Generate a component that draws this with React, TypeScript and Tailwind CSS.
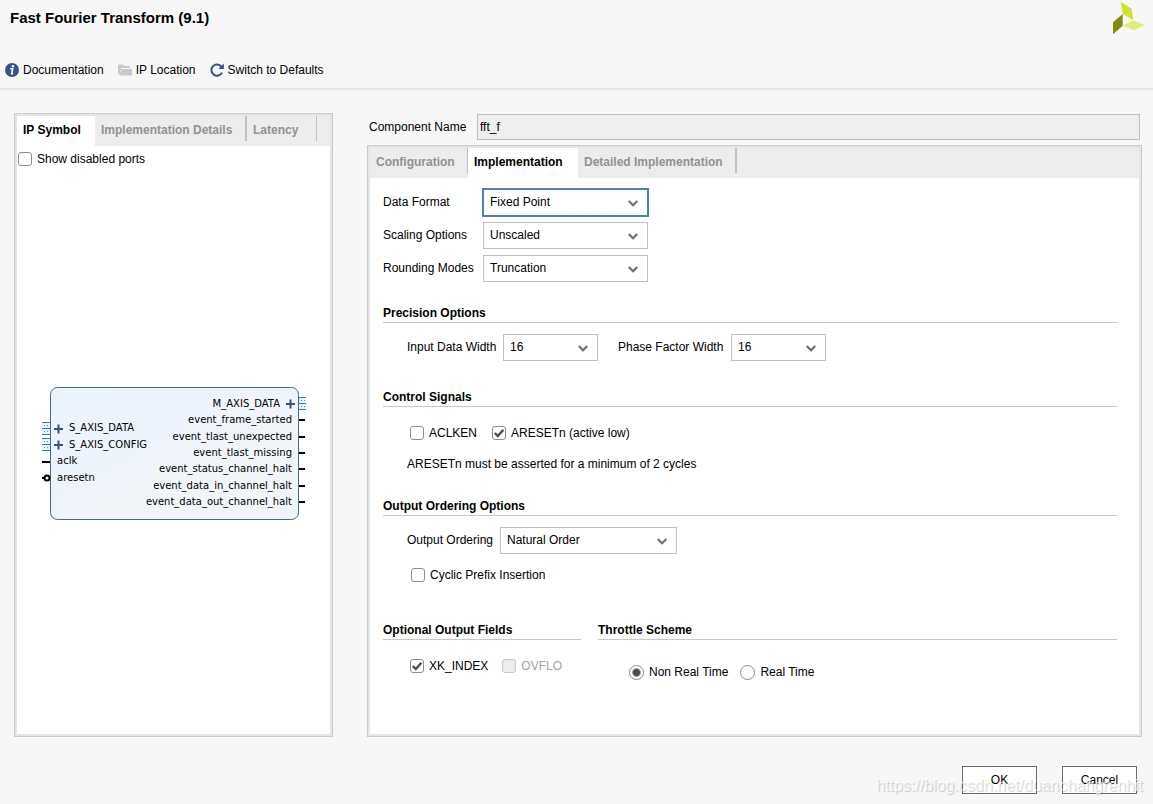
import { useState } from 'react';
import type { ReactNode } from 'react';

interface SelectFieldProps {
    id: string;
    label: string;
    options: string[];
    labelClass: string;
    selectClass: string;
    active?: boolean;
}

interface CheckFieldProps {
    label: string;
    checked?: boolean;
    disabled?: boolean;
}

const eventPorts = [
    { name: 'event_frame_started', y: 420 },
    { name: 'event_tlast_unexpected', y: 437 },
    { name: 'event_tlast_missing', y: 453 },
    { name: 'event_status_channel_halt', y: 469 },
    { name: 'event_data_in_channel_halt', y: 486 },
    { name: 'event_data_out_channel_halt', y: 502 },
];

function SelectField({ id, label, options, labelClass, selectClass, active }: SelectFieldProps) {
    return (
        <div className="flex items-center">
            <label htmlFor={id} className={`shrink-0 whitespace-nowrap pb-0.5 ${labelClass}`}>{label}</label>
            <div className="relative">
                <select
                    id={id}
                    className={`block h-[27px] appearance-none border bg-white pb-0.5 pl-1.5 pr-6 outline-none ${selectClass} ${active ? 'border-[#4f7bc9] ring-1 ring-[#4f7bc9]' : 'border-[#bfbfbf]'}`}
                >
                    {options.map((option) => (
                        <option key={option}>{option}</option>
                    ))}
                </select>
                <svg className="pointer-events-none absolute right-2.5 top-2.5 h-2 w-2.5" viewBox="0 0 10 8" fill="none" stroke="#6e6e6e" strokeWidth="2.2">
                    <path d="M0.7 2 L5 6.2 L9.3 2" />
                </svg>
            </div>
        </div>
    );
}

function CheckField({ label, checked = false, disabled = false }: CheckFieldProps) {
    const [value, setValue] = useState(checked);

    return (
        <label className={`flex h-4 items-center gap-[5px] whitespace-nowrap ${disabled ? 'text-[#a3a3a3]' : ''}`}>
            <span className="relative block size-3.5">
                <input
                    type="checkbox"
                    checked={value}
                    disabled={disabled}
                    onChange={(e) => setValue(e.target.checked)}
                    className="block size-3.5 appearance-none rounded-[3px] border border-[#8c8c8c] bg-white disabled:border-[#c8c8c8] disabled:bg-[#ebecee]"
                />
                {value && (
                    <svg className="pointer-events-none absolute inset-0 size-3.5" viewBox="0 0 14 14" fill="none" stroke="#4d4d4d" strokeWidth="2.4">
                        <path d="M2.8 7 L5.8 10 L11.4 3.8" />
                    </svg>
                )}
            </span>
            {label}
        </label>
    );
}

function RadioField({ label, checked, onChange }: { label: string; checked: boolean; onChange: () => void }) {
    return (
        <label className="flex h-4 items-center gap-[5px] whitespace-nowrap">
            <input
                type="radio"
                name="throttle"
                checked={checked}
                onChange={onChange}
                className="block size-[15px] appearance-none rounded-full border border-[#8c8c8c] bg-white checked:bg-[radial-gradient(circle,#4d4d4d_0_3px,#fff_5px)]"
            />
            {label}
        </label>
    );
}

function SectionTitle({ children }: { children: ReactNode }) {
    return <h2 className="border-b border-[#c8c8c8] pb-px pt-px font-bold">{children}</h2>;
}

function Plus({ x, y }: { x: number; y: number }) {
    return <path d={`M${x - 4.5} ${y}h9M${x} ${y - 4.5}v9`} stroke="#34508c" strokeWidth="2" />;
}

function BusPin({ x, y, width }: { x: number; y: number; width: number }) {
    return (
        <g>
            <rect x={x} y={y} width={width} height="13" fill="#e8f4fd" />
            <path d={`M${x} ${y + 0.5}h${width}M${x} ${y + 6.5}h${width}M${x} ${y + 12.5}h${width}`} stroke="#3f74ad" />
            <path d={`M${x + 2} ${y + 3.5}h${width - 2}M${x + 2} ${y + 9.5}h${width - 2}`} stroke="#4d8fc4" strokeDasharray="1 2" />
        </g>
    );
}

function IpSymbol() {
    return (
        <svg width="269" height="135" viewBox="39 386 269 135" fontFamily='"DejaVu Sans", sans-serif' fontSize="10">
            <defs>
                <linearGradient id="block" x1="0" y1="0" x2="1" y2="1">
                    <stop offset="0" stopColor="#ebf4fe" />
                    <stop offset="0.35" stopColor="#eef4fd" />
                    <stop offset="0.6" stopColor="#f2f5f8" />
                    <stop offset="1" stopColor="#f0f5fa" />
                </linearGradient>
            </defs>
            <rect x="50.5" y="387.5" width="248" height="132" rx="7" fill="url(#block)" stroke="#4266a3" />

            {/* slave side */}
            <BusPin x={42} y={422} width={8} />
            <BusPin x={42} y={438} width={8} />
            <Plus x={58.5} y={429} />
            <Plus x={58.5} y={445} />
            <text x="69" y="431">S_AXIS_DATA</text>
            <text x="69" y="448">S_AXIS_CONFIG</text>
            <path d="M42 462h8M42 478h3" stroke="#000" strokeWidth="2" />
            <circle cx="47" cy="478" r="2.5" fill="#fff" stroke="#000" strokeWidth="2" />
            <text x="57" y="464">aclk</text>
            <text x="57" y="481">aresetn</text>

            {/* master side */}
            <BusPin x={299} y={397} width={7} />
            <Plus x={290.5} y={404} />
            <text x="280" y="407" textAnchor="end">M_AXIS_DATA</text>
            {eventPorts.map((port) => (
                <g key={port.name}>
                    <text x="292" y={port.y + 3} textAnchor="end">{port.name}</text>
                    <path d={`M299 ${port.y}h6`} stroke="#000" strokeWidth="2" />
                </g>
            ))}
        </svg>
    );
}

export default function App() {
    const [throttle, setThrottle] = useState('non-real');

    return (
        <div className='relative flex min-h-screen flex-col bg-[#f7f7f7] font-["Liberation_Sans",Arial,sans-serif] text-[12px] leading-4 text-black'>
            {/* Header */}
            <header className="border-b-2 border-[#e6e6e6]">
                <div className="flex h-[52px] items-start justify-between pl-2.5 pr-2 pt-0.5">
                    <h1 className="pt-2 text-[15px] font-bold">Fast Fourier Transform (9.1)</h1>
                    <svg width="33" height="34" viewBox="1112 2 33 34">
                        <path d="M1113 22.3 L1122.7 14 V25.7 L1113 34.3Z" fill="#838a0c" />
                        <path d="M1120.7 2 L1131.7 8.7 L1133.2 20.2 L1122.7 13.7Z" fill="#d2e030" />
                        <path d="M1122.7 25.4 L1133.7 20.4 L1144.7 25 L1133.7 30.4Z" fill="#e3ec77" />
                    </svg>
                </div>
                <div className="flex gap-3.5 px-[5px] py-2.5">
                    <button className="flex items-center gap-1">
                        <svg width="14" height="14" viewBox="0 0 14 14">
                            <circle cx="7" cy="7" r="7" fill="#34528c" />
                            <circle cx="7.9" cy="3.3" r="1.2" fill="#fff" />
                            <path d="M5.3 5.8h2.4L6.6 10.6h1.6" fill="none" stroke="#fff" strokeWidth="1.6" />
                        </svg>
                        Documentation
                    </button>
                    <button className="flex items-center gap-1">
                        <svg width="14" height="14" viewBox="0 0 14 14" fill="#c9c9c9">
                            <path d="M0 1.5h5l1.2 1.5H12v2H3.6L1.5 10.5V12H0.6L0 11Z" />
                            <path d="M4 6h10v6.5H2V10Z" />
                        </svg>
                        IP Location
                    </button>
                    <button className="flex items-center gap-1">
                        <svg width="14" height="14" viewBox="0 0 14 14">
                            <path d="M11.4 3.6A5.6 5.6 0 1 0 12 9.6" fill="none" stroke="#34528c" strokeWidth="2" />
                            <path d="M13.8 0.6V6H8.4Z" fill="#34528c" />
                        </svg>
                        Switch to Defaults
                    </button>
                </div>
            </header>

            <main className="flex flex-1 gap-[34px] pl-3.5 pr-[11px] pt-[23px]">
                {/* Symbol panel */}
                <section className="flex w-[319px] shrink-0 flex-col border border-[#cbcbcb]">
                    <div className="flex flex-1 flex-col border-2 border-[#e6e6e6] bg-white">
                        <div className="flex h-[30px] items-start bg-[#ececec] font-bold text-[#929292]">
                            <button className="h-[30px] w-[78px] bg-white pb-0.5 pl-1.5 text-left text-black">IP Symbol</button>
                            <button className="h-[25px] w-[152px] whitespace-nowrap border-r-2 border-[#c0c0c0] pl-1.5 pt-[3px] text-left">Implementation Details</button>
                            <button className="h-[25px] w-[70px] border-r border-[#c0c0c0] pl-1.5 pt-[3px] text-left">Latency</button>
                        </div>
                        <div className="px-px pb-1.5 pt-[5px]">
                            <CheckField label="Show disabled ports" />
                        </div>
                        <div className="flex flex-1 items-center justify-center">
                            <IpSymbol />
                        </div>
                    </div>
                </section>

                {/* Settings */}
                <section className="flex flex-1 flex-col">
                    <div className="flex items-center pb-[5px] pl-0.5 pr-0.5 pt-px">
                        <label htmlFor="component-name" className="w-[108px] shrink-0">Component Name</label>
                        <input
                            id="component-name"
                            readOnly
                            value="fft_f"
                            className="h-[26px] min-w-0 flex-1 border border-[#c0c0c0] bg-[#efefef] px-0.5 outline-none"
                        />
                    </div>
                    <div className="flex flex-1 flex-col border border-[#cbcbcb]">
                        <div className="flex-1 border-2 border-[#e6e6e6] bg-white">
                            <div className="flex h-[30px] items-start bg-[#ececec] font-bold text-[#929292]">
                                <button className="h-[25px] w-[98px] border-r border-[#c0c0c0] pl-1.5 pt-[3px] text-left">Configuration</button>
                                <button className="h-[30px] w-[110px] bg-white pb-0.5 pl-1.5 text-left text-black">Implementation</button>
                                <button className="h-[25px] w-[159px] whitespace-nowrap border-r-2 border-[#c0c0c0] pl-1.5 pt-[3px] text-left">Detailed Implementation</button>
                            </div>

                            <div className="pl-[13px] pr-[22px] pt-[11px]">
                                <div className="flex flex-col gap-1.5">
                                    <SelectField id="data-format" label="Data Format" options={['Fixed Point', 'Floating Point']} labelClass="w-[100px]" selectClass="w-[165px]" active />
                                    <SelectField id="scaling" label="Scaling Options" options={['Unscaled', 'Scaled', 'Block Floating Point']} labelClass="w-[100px]" selectClass="w-[165px]" />
                                    <SelectField id="rounding" label="Rounding Modes" options={['Truncation', 'Convergent Rounding']} labelClass="w-[100px]" selectClass="w-[165px]" />
                                </div>

                                <div className="mt-[22px]">
                                    <SectionTitle>Precision Options</SectionTitle>
                                    <div className="mt-[11px] flex gap-5 pl-6">
                                        <SelectField id="input-width" label="Input Data Width" options={['16', '24', '32']} labelClass="w-24" selectClass="w-[95px]" />
                                        <SelectField id="phase-width" label="Phase Factor Width" options={['16', '24', '32']} labelClass="w-[113px]" selectClass="w-[95px]" />
                                    </div>
                                </div>

                                <div className="mt-[27px]">
                                    <SectionTitle>Control Signals</SectionTitle>
                                    <div className="mt-[18px] flex gap-[15px] pl-[27px]">
                                        <CheckField label="ACLKEN" />
                                        <CheckField label="ARESETn (active low)" checked />
                                    </div>
                                    <p className="mt-[15px] pl-6">ARESETn must be asserted for a minimum of 2 cycles</p>
                                </div>

                                <div className="mt-[25px]">
                                    <SectionTitle>Output Ordering Options</SectionTitle>
                                    <div className="mt-[11px] pl-6">
                                        <SelectField id="ordering" label="Output Ordering" options={['Natural Order', 'Bit/Digit Reversed Order']} labelClass="w-[93px]" selectClass="w-[177px]" />
                                    </div>
                                    <div className="mt-[13px] pl-7">
                                        <CheckField label="Cyclic Prefix Insertion" />
                                    </div>
                                </div>

                                <div className="mt-[38px] flex gap-[17px]">
                                    <div className="w-[198px] shrink-0">
                                        <SectionTitle>Optional Output Fields</SectionTitle>
                                        <div className="mt-[18px] flex gap-3.5 pl-[27px]">
                                            <CheckField label="XK_INDEX" checked />
                                            <CheckField label="OVFLO" disabled />
                                        </div>
                                    </div>
                                    <div className="flex-1">
                                        <SectionTitle>Throttle Scheme</SectionTitle>
                                        <div className="mt-6 flex gap-3 pl-[31px]">
                                            <RadioField label="Non Real Time" checked={throttle === 'non-real'} onChange={() => setThrottle('non-real')} />
                                            <RadioField label="Real Time" checked={throttle === 'real'} onChange={() => setThrottle('real')} />
                                        </div>
                                    </div>
                                </div>
                            </div>
                        </div>
                    </div>
                </section>
            </main>

            {/* Footer */}
            <footer className="flex justify-end gap-[25px] pb-2.5 pr-4 pt-[29px]">
                <button className="h-7 w-[75px] border border-[#6b6b6b] bg-white">OK</button>
                <button className="h-7 w-[75px] border border-[#6b6b6b] bg-white">Cancel</button>
            </footer>

            <div className="pointer-events-none absolute bottom-2.5 right-2.5 text-[16px] text-white/70 [text-shadow:1px_1px_1px_rgba(0,0,0,0.2)]">
                https://blog.csdn.net/duanchangrenhit
            </div>
        </div>
    );
}
